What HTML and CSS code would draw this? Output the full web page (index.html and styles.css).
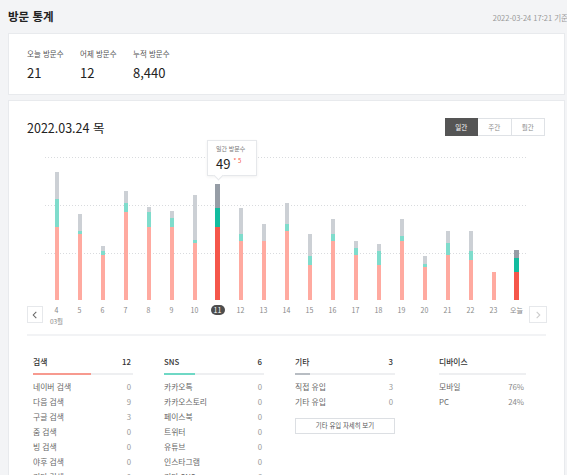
FILE: index.html
```html
<!DOCTYPE html>
<html lang="ko">
<head>
<meta charset="utf-8">
<title>방문 통계</title>
<link rel="stylesheet" href="styles.css">
</head>
<body>
<div class="page">
  <header class="head">
    <h1 class="title">방문 통계</h1>
    <span class="stamp">2022-03-24 17:21 기준</span>
  </header>

  <section class="card summary">
    <div class="stat"><div class="stat-label">오늘 방문수</div><div class="stat-value">21</div></div>
    <div class="stat"><div class="stat-label">어제 방문수</div><div class="stat-value">12</div></div>
    <div class="stat"><div class="stat-label">누적 방문수</div><div class="stat-value">8,440</div></div>
  </section>

  <section class="card chart-card">
    <div class="chart-block">
      <div class="chart-top">
        <h2 class="chart-date">2022.03.24 목</h2>
        <div class="seg">
          <button class="seg-btn active">일간</button>
          <button class="seg-btn">주간</button>
          <button class="seg-btn">월간</button>
        </div>
      </div>

      <div class="plot">
        <div class="grid-line g1"></div>
        <div class="grid-line g2"></div>
        <div class="grid-line g3"></div>

        <div class="slot"><div class="bar"><i class="s-gray" style="height:27px"></i><i class="s-teal" style="height:28px"></i><i class="s-pink" style="height:73px"></i></div></div>
        <div class="slot"><div class="bar"><i class="s-gray" style="height:17px"></i><i class="s-teal" style="height:3px"></i><i class="s-pink" style="height:66px"></i></div></div>
        <div class="slot"><div class="bar"><i class="s-gray" style="height:5px"></i><i class="s-teal" style="height:4px"></i><i class="s-pink" style="height:45px"></i></div></div>
        <div class="slot"><div class="bar"><i class="s-gray" style="height:12px"></i><i class="s-teal" style="height:9px"></i><i class="s-pink" style="height:88px"></i></div></div>
        <div class="slot"><div class="bar"><i class="s-gray" style="height:5px"></i><i class="s-teal" style="height:15px"></i><i class="s-pink" style="height:73px"></i></div></div>
        <div class="slot"><div class="bar"><i class="s-gray" style="height:7px"></i><i class="s-teal" style="height:9px"></i><i class="s-pink" style="height:73px"></i></div></div>
        <div class="slot"><div class="bar"><i class="s-gray" style="height:45px"></i><i class="s-teal" style="height:3px"></i><i class="s-pink" style="height:57px"></i></div></div>
        <div class="slot"><div class="bar strong"><i class="s-gray" style="height:24px"></i><i class="s-teal" style="height:19px"></i><i class="s-pink" style="height:73px"></i></div></div>
        <div class="slot"><div class="bar"><i class="s-gray" style="height:26px"></i><i class="s-teal" style="height:7px"></i><i class="s-pink" style="height:59px"></i></div></div>
        <div class="slot"><div class="bar"><i class="s-gray" style="height:17px"></i><i class="s-pink" style="height:59px"></i></div></div>
        <div class="slot"><div class="bar"><i class="s-gray" style="height:21px"></i><i class="s-teal" style="height:7px"></i><i class="s-pink" style="height:69px"></i></div></div>
        <div class="slot"><div class="bar"><i class="s-gray" style="height:22px"></i><i class="s-teal" style="height:9px"></i><i class="s-pink" style="height:35px"></i></div></div>
        <div class="slot"><div class="bar"><i class="s-gray" style="height:15px"></i><i class="s-teal" style="height:7px"></i><i class="s-pink" style="height:59px"></i></div></div>
        <div class="slot"><div class="bar"><i class="s-gray" style="height:7px"></i><i class="s-teal" style="height:7px"></i><i class="s-pink" style="height:45px"></i></div></div>
        <div class="slot"><div class="bar"><i class="s-gray" style="height:7px"></i><i class="s-teal" style="height:14px"></i><i class="s-pink" style="height:35px"></i></div></div>
        <div class="slot"><div class="bar"><i class="s-gray" style="height:17px"></i><i class="s-teal" style="height:5px"></i><i class="s-pink" style="height:59px"></i></div></div>
        <div class="slot"><div class="bar"><i class="s-gray" style="height:8px"></i><i class="s-teal" style="height:3px"></i><i class="s-pink" style="height:33px"></i></div></div>
        <div class="slot"><div class="bar"><i class="s-gray" style="height:12px"></i><i class="s-teal" style="height:12px"></i><i class="s-pink" style="height:45px"></i></div></div>
        <div class="slot"><div class="bar"><i class="s-gray" style="height:20px"></i><i class="s-teal" style="height:9px"></i><i class="s-pink" style="height:40px"></i></div></div>
        <div class="slot"><div class="bar"><i class="s-pink" style="height:28px"></i></div></div>
        <div class="slot"><div class="bar strong"><i class="s-gray" style="height:8px"></i><i class="s-teal" style="height:14px"></i><i class="s-pink" style="height:28px"></i></div></div>

        <div class="tip">
          <div class="tip-label">일간 방문수</div>
          <div class="tip-value">49<sup class="tip-delta">* 5</sup></div>
        </div>
      </div>

      <div class="axis">
        <button class="nav prev" aria-label="이전"><svg viewBox="0 0 16 16" width="16" height="16"><path d="M9.5 4.5 6 8l3.5 3.5" fill="none" stroke="#666" stroke-width="1.2"/></svg></button>
        <div class="ticks">
          <div class="tick">4<span class="month">03월</span></div>
          <div class="tick">5</div>
          <div class="tick">6</div>
          <div class="tick">7</div>
          <div class="tick">8</div>
          <div class="tick">9</div>
          <div class="tick">10</div>
          <div class="tick"><span class="pill">11</span></div>
          <div class="tick">12</div>
          <div class="tick">13</div>
          <div class="tick">14</div>
          <div class="tick">15</div>
          <div class="tick">16</div>
          <div class="tick">17</div>
          <div class="tick">18</div>
          <div class="tick">19</div>
          <div class="tick">20</div>
          <div class="tick">21</div>
          <div class="tick">22</div>
          <div class="tick">23</div>
          <div class="tick">오늘</div>
        </div>
        <button class="nav next" aria-label="다음"><svg viewBox="0 0 18 16" width="18" height="16"><path d="M7.5 4.5 11 8l-3.5 3.5" fill="none" stroke="#ccc" stroke-width="1.2"/></svg></button>
      </div>
    </div>

    <div class="sources">
      <div class="src">
        <div class="src-head"><span>검색</span><span>12</span></div>
        <div class="src-bar"><span class="fill pink" style="width:58%"></span></div>
        <ul class="rows">
          <li><span>네이버 검색</span><span class="v">0</span></li>
          <li><span>다음 검색</span><span class="v">9</span></li>
          <li><span>구글 검색</span><span class="v">3</span></li>
          <li><span>줌 검색</span><span class="v">0</span></li>
          <li><span>빙 검색</span><span class="v">0</span></li>
          <li><span>야후 검색</span><span class="v">0</span></li>
          <li><span>기타 검색</span><span class="v">0</span></li>
        </ul>
      </div>
      <div class="src">
        <div class="src-head"><span>SNS</span><span>6</span></div>
        <div class="src-bar"><span class="fill teal" style="width:31%"></span></div>
        <ul class="rows">
          <li><span>카카오톡</span><span class="v">0</span></li>
          <li><span>카카오스토리</span><span class="v">0</span></li>
          <li><span>페이스북</span><span class="v">0</span></li>
          <li><span>트위터</span><span class="v">0</span></li>
          <li><span>유튜브</span><span class="v">0</span></li>
          <li><span>인스타그램</span><span class="v">0</span></li>
          <li><span>기타 SNS</span><span class="v">6</span></li>
        </ul>
      </div>
      <div class="src">
        <div class="src-head"><span>기타</span><span>3</span></div>
        <div class="src-bar"><span class="fill gray" style="width:15%"></span></div>
        <ul class="rows">
          <li><span>직접 유입</span><span class="v">3</span></li>
          <li><span>기타 유입</span><span class="v">0</span></li>
        </ul>
        <button class="more">기타 유입 자세히 보기</button>
      </div>
      <div class="src device">
        <div class="src-head"><span>디바이스</span></div>
        <div class="src-bar"></div>
        <ul class="rows">
          <li><span>모바일</span><span class="v">76%</span></li>
          <li><span>PC</span><span class="v">24%</span></li>
        </ul>
      </div>
    </div>
  </section>
</div>
</body>
</html>
```

FILE: styles.css
```css
* { box-sizing: border-box; }

html, body {
  margin: 0;
  padding: 0;
  background: #f3f4f6;
  overflow: hidden;
}

body {
  font-family: "Noto Sans CJK KR", "Noto Sans", sans-serif;
  color: #222;
}

.page {
  width: 557px;
  margin-left: 8px;
}

/* header */
.head {
  height: 33px;
  margin-right: -3px;
  display: flex;
  align-items: center;
  justify-content: space-between;
  padding-bottom: 2px;
}

.title {
  margin: 0;
  font-size: 11.5px;
  font-weight: 700;
  color: #222;
  line-height: 14px;
}

.stamp {
  font-size: 7.5px;
  color: #999;
  padding-top: 4px;
}

/* cards */
.card {
  background: #fff;
  border: 1px solid #e8eaed;
}

.summary {
  display: flex;
  padding: 14px 18px 13px;
}

.stat { width: 53px; }

.stat-label {
  font-size: 7.5px;
  line-height: 12px;
  color: #555;
}

.stat-value {
  margin-top: 4px;
  font-size: 13px;
  line-height: 17px;
  color: #222;
}

.chart-card {
  margin-top: 5px;
  padding: 0 18px 40px;
}

.chart-block {
  border-bottom: 2px solid #f2f3f5;
  padding-bottom: 8px;
}

.chart-top {
  display: flex;
  align-items: center;
  justify-content: space-between;
  padding-top: 17px;
  height: 35px;
}

.chart-date {
  margin: 0;
  font-size: 12.5px;
  font-weight: 400;
  color: #222;
  line-height: 18px;
  padding-top: 2px;
}

.seg {
  display: flex;
  margin-right: 1px;
}

.seg-btn {
  width: 33.5px;
  height: 18px;
  padding: 0;
  border: 1px solid #dfe2e6;
  border-left: none;
  background: #fff;
  color: #888;
  font-family: inherit;
  font-size: 6.5px;
}

.seg-btn:first-child { border-left: 1px solid #dfe2e6; }

.seg-btn.active {
  background: #555;
  border-color: #555;
  color: #fff;
}

/* plot */
.plot {
  position: relative;
  margin-left: 18px;
  width: 483px;
  height: 164px;
  display: flex;
  align-items: flex-end;
}

.grid-line {
  position: absolute;
  left: 0;
  right: 0;
  height: 1px;
  background-image: linear-gradient(to right, #d9dbde 1px, transparent 1px);
  background-size: 3px 1px;
}
.g1 { top: 21px; }
.g2 { top: 69px; }
.g3 { top: 117px; }

.slot {
  position: relative;
  flex: 0 0 23px;
  display: flex;
  justify-content: center;
}

.bar {
  width: 4px;
  display: flex;
  flex-direction: column;
}

.bar i { display: block; }

.s-gray { background: #ccd0d5; }
.s-teal { background: #7fdccc; }
.s-pink { background: #ffaaa0; }

.bar.strong { width: 5px; }
.bar.strong .s-gray { background: #969da6; }
.bar.strong .s-teal { background: #12bc9f; }
.bar.strong .s-pink { background: #f5564a; }

.tip {
  position: absolute;
  left: 162px;
  top: 4px;
  width: 50px;
  height: 36px;
  background: #fff;
  border: 1px solid #e6e8eb;
  box-shadow: 0 1px 3px rgba(0,0,0,0.06);
  padding: 4px 0 0 8px;
}

.tip::after {
  content: "";
  position: absolute;
  left: 7px;
  bottom: -4px;
  width: 6px;
  height: 6px;
  background: #fff;
  border-right: 1px solid #e6e8eb;
  border-bottom: 1px solid #e6e8eb;
  transform: rotate(45deg);
}

.tip-label {
  font-size: 6px;
  line-height: 8px;
  color: #777;
}

.tip-value {
  margin-top: 2px;
  font-size: 13px;
  line-height: 17px;
  color: #222;
}

.tip-delta {
  font-size: 6px;
  color: #f5564a;
  margin-left: 3px;
  vertical-align: 6px;
  line-height: 0;
}

/* axis */
.axis {
  display: flex;
  align-items: flex-start;
  margin-top: 5px;
}

.nav {
  width: 16px;
  height: 17px;
  padding: 0;
  margin-top: 1px;
  border: 1px solid #e6e8eb;
  background: #fff;
  display: flex;
  align-items: center;
  justify-content: center;
}

.nav svg { display: block; }

.prev { margin-right: 2px; }
.next { width: 18px; margin-left: 1px; }

.ticks {
  display: flex;
  width: 483px;
}

.tick {
  flex: 0 0 23px;
  text-align: center;
  font-size: 7px;
  line-height: 10px;
  color: #888;
}

.month {
  display: block;
  margin-top: 2px;
  font-size: 6.5px;
  line-height: 9px;
  color: #888;
}

.pill {
  display: inline-block;
  min-width: 14px;
  padding: 0 2px;
  border-radius: 5px;
  background: #4e4e4e;
  color: #fff;
  line-height: 10px;
}

/* sources */
.sources {
  display: grid;
  grid-template-columns: 100px 100px 100px 100px;
  column-gap: 31px;
  padding: 20px 0 0 6px;
}

.device { margin-left: 13px; }

.src-head {
  display: flex;
  justify-content: space-between;
  font-size: 7.8px;
  line-height: 12px;
  color: #333;
  font-weight: 500;
  padding-right: 2px;
}

.src-bar {
  margin-top: 5px;
  height: 2px;
  background: #eeeff1;
}

.fill {
  display: block;
  height: 2px;
}
.fill.pink { background: #f79a8f; }
.fill.teal { background: #6fd8c5; }
.fill.gray { background: #b8bdc3; }

.rows {
  list-style: none;
  margin: 4px 0 0;
  padding: 0;
}

.rows li {
  display: flex;
  justify-content: space-between;
  font-size: 7.8px;
  line-height: 15px;
  color: #666;
  padding-right: 2px;
}

.rows .v { color: #999; }

.device .rows .v { color: #888; }

.more {
  margin-top: 5px;
  width: 100px;
  height: 16px;
  padding: 0;
  border: 1px solid #dcdfe3;
  background: #fff;
  font-family: inherit;
  font-size: 6.4px;
  color: #555;
}
```
